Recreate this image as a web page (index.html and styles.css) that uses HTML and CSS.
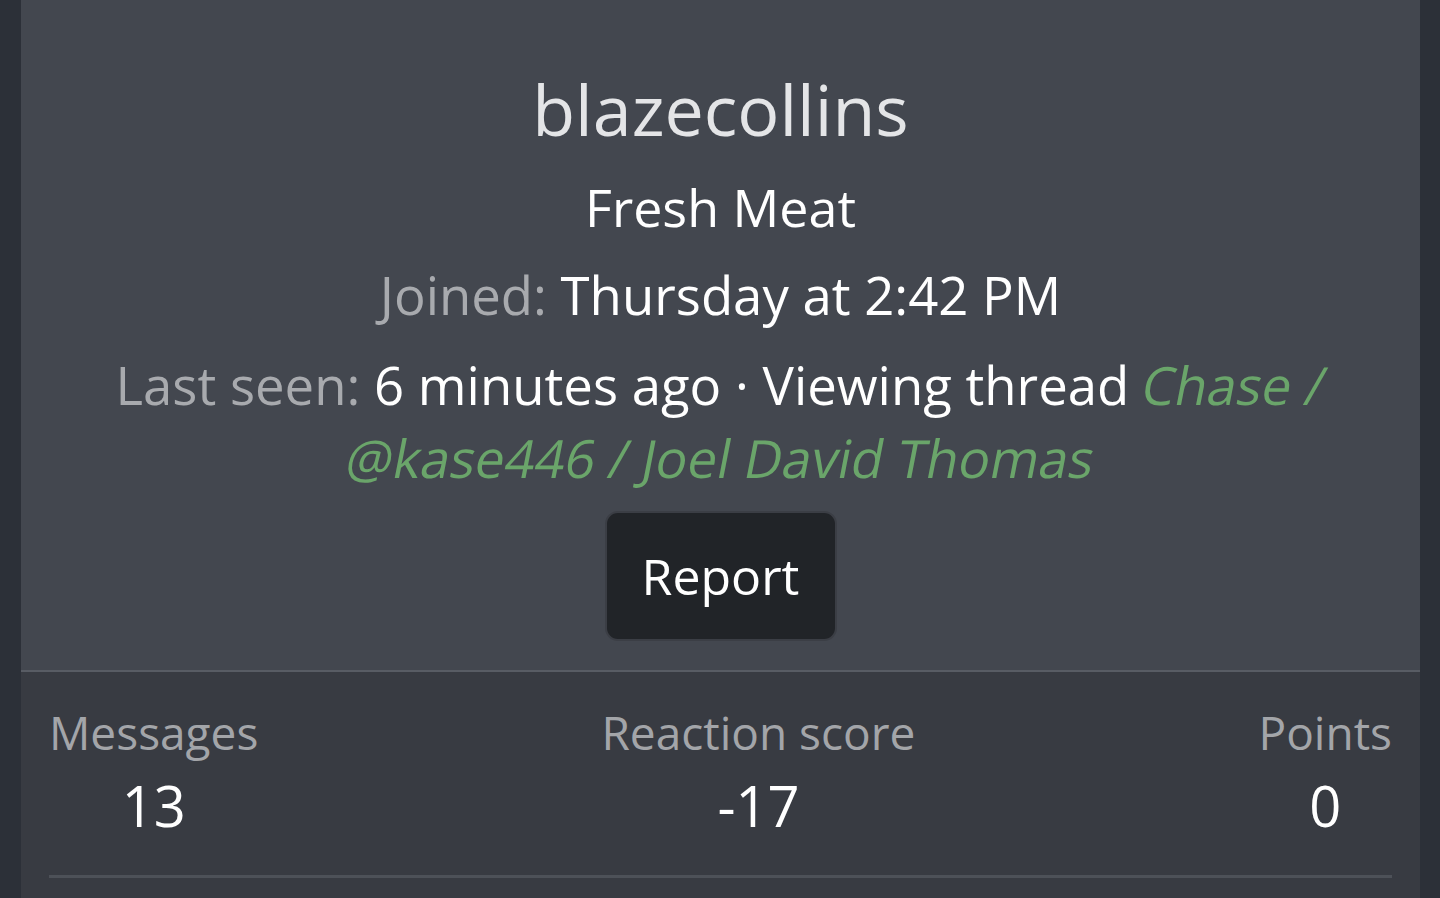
FILE: index.html
```html
<!DOCTYPE html>
<html lang="en">
  <head>
    <meta charset="UTF-8" />
    <meta name="viewport" content="width=device-width, initial-scale=1.0" />
    <title>blazecollins</title>
    <link rel="stylesheet" href="styles.css">
  </head>
  <body>
    <div class="page">
      <div class="profile">
        <div class="profile-header">
          <h1 class="username">blazecollins</h1>
          <div class="user-title">Fresh Meat</div>
          <div class="info-line">
            <span class="info-label">Joined:</span> Thursday at 2:42 PM
          </div>
          <div class="info-line">
            <span class="info-label">Last seen:</span> 6 minutes ago · Viewing thread
            <a class="thread-link" href="#"><span>Chase /</span> <span>@kase446 / Joel David Thomas</span></a>
          </div>
          <button class="report-btn">Report</button>
        </div>

        <div class="profile-stats">
          <div class="stats-row">
            <dl class="stat">
              <dt>Messages</dt>
              <dd>13</dd>
            </dl>
            <dl class="stat">
              <dt>Reaction score</dt>
              <dd>-17</dd>
            </dl>
            <dl class="stat">
              <dt>Points</dt>
              <dd>0</dd>
            </dl>
          </div>
        </div>
      </div>
    </div>
  </body>
</html>
```

FILE: styles.css
```css
body {
  margin: 0;
  background-color: #2c3038;
  font-family: "Open Sans", "Noto Sans", sans-serif;
  color: #fff;
}

.page {
  padding: 0 20px 0 21px;
  min-height: 898px;
}

.profile {
  background-color: #383b42;
  min-height: 898px;
}

.profile-header {
  background-color: #43474f;
  text-align: center;
  padding: 68px 60px 29px;
}

.username {
  margin: 0;
  font-size: 70px;
  font-weight: 400;
  line-height: 82px;
  color: #e4e5e7;
}

.user-title {
  margin-top: 22px;
  font-size: 52px;
  line-height: 70px;
}

.info-line {
  margin-top: 16px;
  font-size: 52.7px;
  line-height: 73px;
}

.info-line + .info-line {
  margin-top: 17px;
}

.info-label {
  color: #a8aaae;
}

.thread-link {
  color: #6aa56a;
  text-decoration: none;
}

/* the source slants the regular face instead of using the italic one */
.thread-link span {
  display: inline-block;
  transform: skewX(-11deg);
}

.report-btn {
  display: block;
  margin: 17px auto 0;
  width: 232px;
  height: 130px;
  background-color: #212428;
  border: 2px solid #3b3e45;
  border-radius: 13px;
  color: #fff;
  font-family: inherit;
  font-size: 50px;
  cursor: pointer;
}

.profile-stats {
  border-top: 2px solid #585c64;
  padding: 29px 28px 0;
}

.stats-row {
  display: flex;
  justify-content: space-between;
  border-bottom: 3px solid #4d5158;
  padding-bottom: 31px;
}

.stat {
  margin: 0;
  text-align: center;
}

.stat dt {
  font-size: 46px;
  line-height: 62px;
  color: #a3a5a9;
}

.stat dd {
  margin: 4px 0 0;
  font-size: 56px;
  line-height: 77px;
}
```
